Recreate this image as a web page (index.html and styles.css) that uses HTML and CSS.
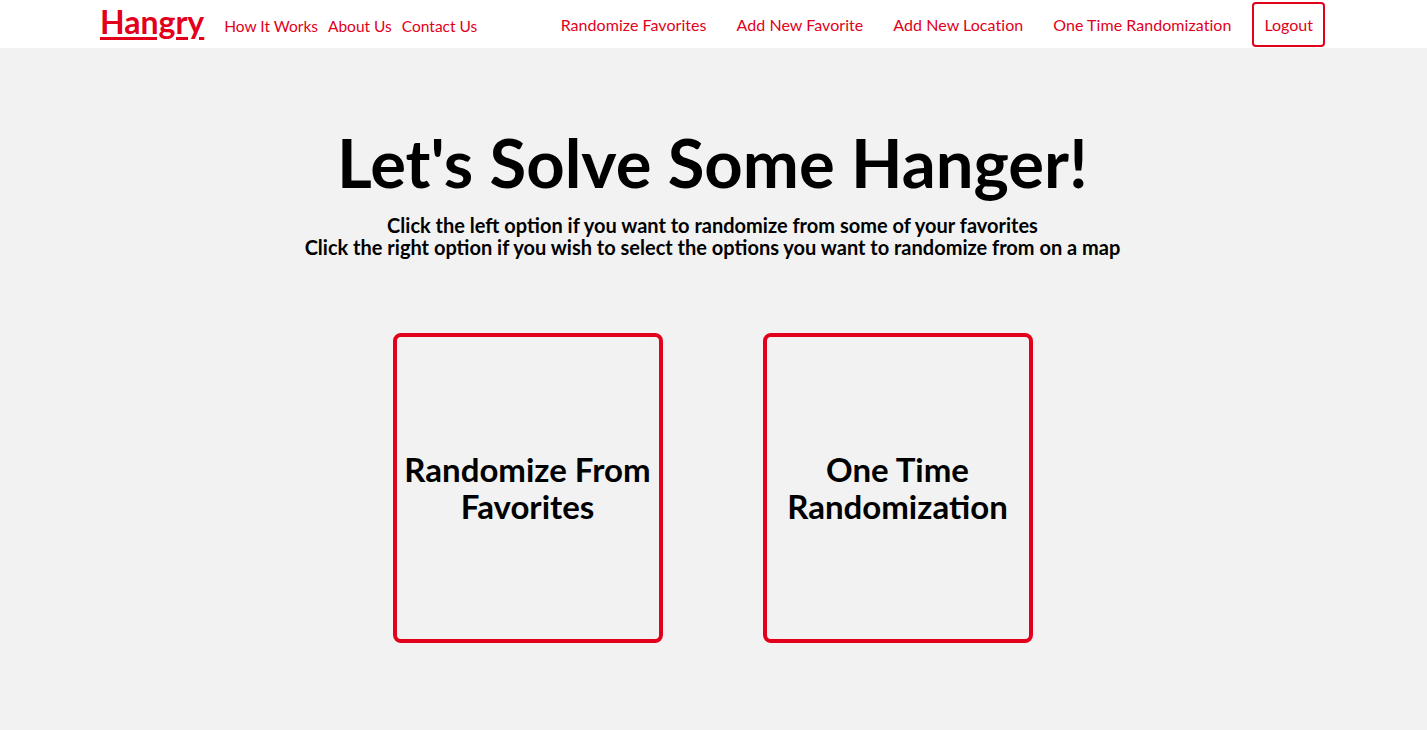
FILE: index.html
```html
<!DOCTYPE html>
<html lang="en">
<head>
<meta charset="utf-8">
<title>Hangry</title>
<link rel="stylesheet" href="styles.css">
</head>
<body>
<header class="navbar">
  <div class="nav-left">
    <a class="logo" href="#">Hangry</a>
    <nav class="nav-links">
      <a href="#">How It Works</a>
      <a href="#">About Us</a>
      <a href="#">Contact Us</a>
    </nav>
  </div>
  <nav class="nav-right">
    <a href="#">Randomize Favorites</a>
    <a href="#">Add New Favorite</a>
    <a href="#">Add New Location</a>
    <a href="#">One Time Randomization</a>
    <a class="logout" href="#">Logout</a>
  </nav>
</header>
<main class="main">
  <h1 class="title">Let's Solve Some Hanger!</h1>
  <p class="subtitle">Click the left option if you want to randomize from some of your favorites<br>Click the right option if you wish to select the options you want to randomize from on a map</p>
  <div class="options">
    <a class="option" href="#">Randomize From Favorites</a>
    <a class="option" href="#">One Time Randomization</a>
  </div>
</main>
</body>
</html>
```

FILE: styles.css
```css
html, body {
  margin: 0;
  padding: 0;
  height: 100%;
}
body {
  font-family: "Lato", "DejaVu Sans", sans-serif;
  background: #f2f2f2;
  color: #000;
}
a {
  color: #e2001a;
  text-decoration: none;
}
.navbar {
  height: 48px;
  background: #fff;
  display: flex;
  justify-content: space-between;
  align-items: center;
  padding: 0 102px 0 100px;
}
.nav-left {
  display: flex;
  align-items: flex-start;
  align-self: stretch;
}
.logo {
  font-size: 32px;
  font-weight: 700;
  line-height: 38px;
  margin-top: 3px;
  text-decoration: underline;
  text-decoration-thickness: 3px;
  text-underline-offset: 3px;
  margin-right: 20px;
}
.nav-links {
  display: flex;
  gap: 10px;
  font-size: 15.5px;
  line-height: 19px;
  margin-top: 17px;
}
.nav-right {
  display: flex;
  align-items: center;
  gap: 30px;
  font-size: 16px;
  letter-spacing: 0.05px;
}
.logout {
  margin-left: -9px;
  border: 2px solid #e2001a;
  border-radius: 4px;
  padding: 11px 10px;
  letter-spacing: 0;
}
.main {
  display: flex;
  flex-direction: column;
  align-items: center;
  padding: 74px 2px 0 0;
}
.title {
  margin: 0;
  font-size: 67px;
  font-weight: 700;
  line-height: 80px;
}
.subtitle {
  margin: 12px 0 0;
  font-size: 20px;
  font-weight: 700;
  line-height: 22px;
  text-align: center;
}
.options {
  display: flex;
  gap: 100px;
  margin-top: 75px;
}
.option {
  width: 262px;
  height: 302px;
  border: 4px solid #e2001a;
  border-radius: 8px;
  display: flex;
  align-items: center;
  justify-content: center;
  text-align: center;
  color: #000;
  font-size: 33px;
  font-weight: 700;
  line-height: 37px;
}
```
